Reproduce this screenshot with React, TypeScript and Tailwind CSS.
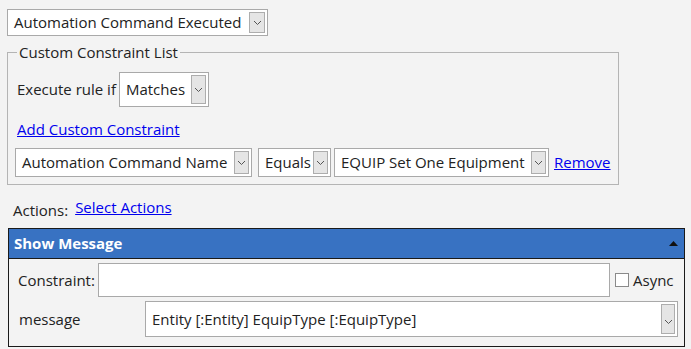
import React from 'react';

const font = "font-['Open_Sans','Noto_Sans',sans-serif]";

const Chevron: React.FC = () => (
  <svg width="9" height="6" viewBox="0 0 9 6" fill="none">
    <path d="M1 1l3.5 3.5L8 1" stroke="#555" strokeWidth="1" />
  </svg>
);

type SelectProps = { label: string; className: string; btn: string };

// Windows-style dropdown: white field with a grey button at the right
const FakeSelect: React.FC<SelectProps> = ({ label, className, btn }) => (
  <div className={`flex items-stretch border border-[#a9a9a9] bg-white ${className}`}>
    <div className="flex flex-1 items-center overflow-hidden whitespace-nowrap pl-[6px] text-[#222]">{label}</div>
    <div className={`m-[2px] flex items-center justify-center border border-[#adadad] bg-[#e5e5e5] ${btn}`}>
      <Chevron />
    </div>
  </div>
);

const App: React.FC = () => {
  return (
    <div className={`h-[349px] w-[691px] overflow-hidden bg-[#f3f3f3] text-[15px] text-[#222] ${font}`}>
      <div className="pl-[7px] pt-[9px]">
        <FakeSelect label="Automation Command Executed" className="h-[27px] w-[261px]" btn="w-[16px]" />
      </div>

      <fieldset className="ml-[7px] mt-[6px] h-[143px] w-[606px] border border-[#b4b4b4] px-[7px]">
        <legend className="ml-[2px] px-[2px] leading-[20px]">Custom Constraint List</legend>
        <div className="mt-[10px] flex items-center">
          <span className="ml-[2px]">Execute rule if</span>
          <FakeSelect label="Matches" className="ml-[3px] h-[35px] w-[90px]" btn="w-[15px]" />
        </div>
        <div className="mt-[12px] pl-[2px] leading-[20px]">
          <a href="#" className="text-[#0000ee] underline">Add Custom Constraint</a>
        </div>
        <div className="mt-[9px] flex items-center">
          <FakeSelect label="Automation Command Name" className="h-[29px] w-[237px]" btn="w-[15px]" />
          <FakeSelect label="Equals" className="ml-[6px] h-[29px] w-[73px]" btn="w-[15px]" />
          <FakeSelect label="EQUIP Set One Equipment" className="ml-[3px] h-[29px] w-[215px]" btn="w-[15px]" />
          <a href="#" className="ml-[5px] text-[#0000ee] underline">Remove</a>
        </div>
      </fieldset>

      <div className="mt-[9px] flex items-center pl-[13px] leading-[20px]">
        <span className="mt-[6px]">Actions:</span>
        <a href="#" className="ml-[7px] text-[#0000ee] underline">Select Actions</a>
      </div>

      <div className="ml-[8px] mt-[8px] w-[677px] border border-[#1a1a1a]">
        <div className="flex h-[30px] items-center justify-between border-b border-[#1a1a1a] bg-[#3872c2] pl-[5px] pr-[6px]">
          <span className="font-bold text-white">Show Message</span>
          <svg width="9" height="5" viewBox="0 0 9 5"><path d="M0 5L4.5 0L9 5z" fill="#111" /></svg>
        </div>
        <div className="bg-[#f3f3f3] pb-[9px]">
          <div className="flex items-center pt-[4px]">
            <span className="ml-[9px] w-[80px]">Constraint:</span>
            <div className="h-[34px] w-[512px] border border-[#a9a9a9] bg-white" />
            <div className="ml-[5px] h-[14px] w-[14px] border border-[#8a8a8a] bg-white" />
            <span className="ml-[4px]">Async</span>
          </div>
          <div className="mt-[4px] flex items-center">
            <span className="ml-[10px] w-[126px]">message</span>
            <FakeSelect label="Entity [:Entity] EquipType [:EquipType]" className="h-[36px] w-[533px]" btn="w-[14px] items-end pb-[8px]" />
          </div>
        </div>
      </div>
    </div>
  );
};

export default App;
